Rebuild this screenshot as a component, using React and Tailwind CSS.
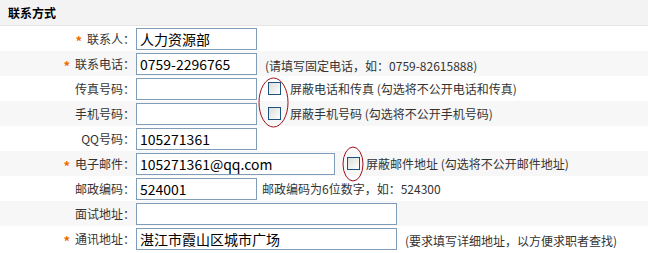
import React from "react";

const font = { fontFamily: '"Noto Sans CJK SC", "Noto Sans", sans-serif' };

function Star() {
  return <span className="text-[#f06a00] text-[13px] font-bold mr-[5px] leading-none relative top-[2px]">*</span>;
}

function Field({ value = "", width = "w-[121px]" }) {
  return (
    <input
      readOnly
      value={value}
      className={`${width} h-[22px] border border-[#7f9db9] bg-white px-[3px] text-[14px] text-black outline-none`}
      style={font}
    />
  );
}

function Check({ className = "" }) {
  return (
    <span className={`inline-block w-[13px] h-[13px] border border-[#1c5180] bg-gradient-to-br from-[#dcdcd7] to-[#ffffff] ${className}`} />
  );
}

function Row({ label, required, gray, children }) {
  return (
    <div className={`flex items-center h-[25px] ${gray ? "bg-[#f7f7f7]" : "bg-white"}`}>
      <div className="w-[136px] shrink-0 text-right text-[12px] text-[#333] pr-[1px]">
        {required && <Star />}
        {label}：
      </div>
      {children}
    </div>
  );
}

export default function App() {
  return (
    <div className="relative w-[648px] h-[253px] bg-white overflow-hidden" style={font}>
      <div className="h-[26px] bg-[#f3f3f3] border-b border-[#e6e6e6] flex items-center pl-[8px]">
        <span className="text-[12px] font-bold text-black">联系方式</span>
      </div>

      <Row label="联系人" required>
        <Field value="人力资源部" />
      </Row>
      <Row label="联系电话" required gray>
        <Field value="0759-2296765" />
        <span className="ml-[8px] text-[12px] text-[#333] mt-[4px]">(请填写固定电话，如：0759-82615888)</span>
      </Row>
      <Row label="传真号码">
        <Field />
        <Check className="ml-[11px]" />
        <span className="ml-[9px] text-[12px] text-[#333]">屏蔽电话和传真 (勾选将不公开电话和传真)</span>
      </Row>
      <Row label="手机号码" gray>
        <Field />
        <Check className="ml-[11px]" />
        <span className="ml-[9px] text-[12px] text-[#333]">屏蔽手机号码 (勾选将不公开手机号码)</span>
      </Row>
      <Row label="QQ号码">
        <Field value="105271361" />
      </Row>
      <Row label="电子邮件" required gray>
        <Field value="105271361@qq.com" width="w-[199px]" />
        <Check className="ml-[12px]" />
        <span className="ml-[6px] text-[12px] text-[#333]">屏蔽邮件地址 (勾选将不公开邮件地址)</span>
      </Row>
      <Row label="邮政编码">
        <Field value="524001" />
        <span className="ml-[5px] text-[12px] text-[#333]">邮政编码为6位数字，如：524300</span>
      </Row>
      <Row label="面试地址" gray>
        <Field width="w-[261px]" />
      </Row>
      <Row label="通讯地址" required>
        <Field value="湛江市霞山区城市广场" width="w-[261px]" />
        <span className="ml-[8px] text-[12px] text-[#333] mt-[4px]">(要求填写详细地址，以方便求职者查找)</span>
      </Row>

      <svg className="absolute left-0 top-0 pointer-events-none" width="648" height="253">
        <ellipse cx="273.5" cy="102.5" rx="14.5" ry="24.5" fill="none" stroke="#a0101c" strokeWidth="1" />
        <ellipse cx="353" cy="164" rx="10" ry="17" fill="none" stroke="#a0101c" strokeWidth="1" />
      </svg>
    </div>
  );
}
